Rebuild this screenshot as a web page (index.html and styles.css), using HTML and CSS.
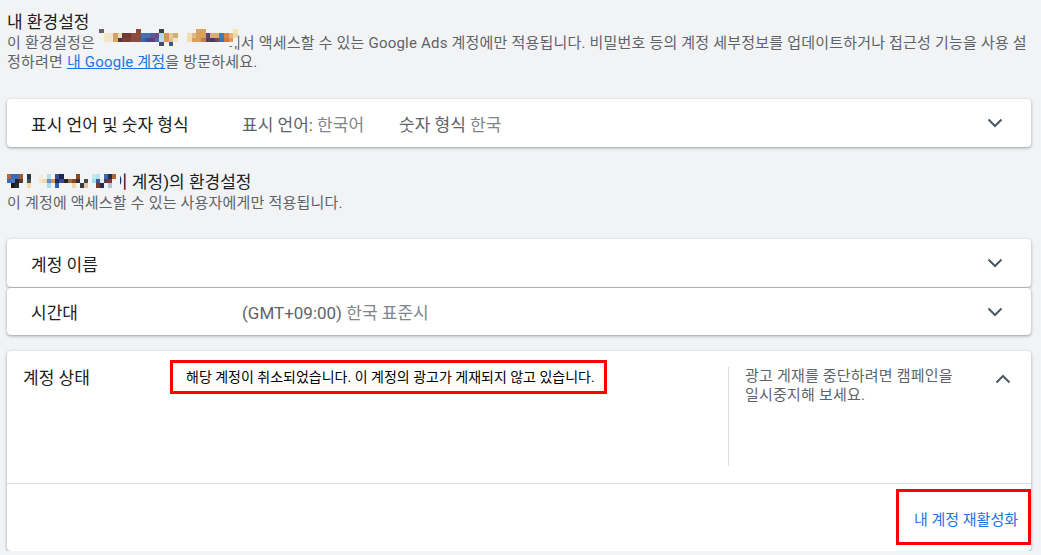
FILE: index.html
```html
<!DOCTYPE html>
<html lang="ko">
<head>
    <meta charset="UTF-8">
    <meta name="viewport" content="width=device-width, initial-scale=1.0">
    <title>환경설정 - Google Ads</title>
    <link rel="stylesheet" href="styles.css">
</head>
<body>
    <div class="page">
        <div class="section-head">
            <div class="section-title">내 환경설정</div>
            <div class="section-desc">이 환경설정은 <svg class="blur blur-email" viewBox="0 0 30 4" preserveAspectRatio="none" shape-rendering="crispEdges">
                    <rect x="27.5" y="0" width="2.5" height="4" fill="#f1f3f4"/>
                    <rect x="0" y="0" width="1" height="1" fill="#6b5b7b"/>
                    <rect x="8" y="0" width="1" height="1" fill="#8b4a3a"/>
                    <rect x="13" y="0" width="1" height="1" fill="#3c4048"/>
                    <rect x="21" y="0" width="2" height="1" fill="#d9a262"/>
                    <rect x="29" y="0" width="1" height="1" fill="#f0e6b0"/>
                    <rect x="1" y="1" width="1" height="1" fill="#f3e9bd"/>
                    <rect x="2" y="1" width="1" height="1" fill="#ece4d0"/>
                    <rect x="3" y="1" width="1" height="1" fill="#d5a064"/>
                    <rect x="4" y="1" width="1" height="1" fill="#e6dcc8"/>
                    <rect x="5" y="1" width="2" height="1" fill="#6e3a36"/>
                    <rect x="7" y="1" width="2" height="1" fill="#8d4b3d"/>
                    <rect x="9" y="1" width="2" height="1" fill="#4b6eae"/>
                    <rect x="11" y="1" width="1" height="1" fill="#5a5a9a"/>
                    <rect x="12" y="1" width="1" height="1" fill="#6d4a7e"/>
                    <rect x="13" y="1" width="1" height="1" fill="#b9d3ea"/>
                    <rect x="14" y="1" width="1" height="1" fill="#d9935a"/>
                    <rect x="15" y="1" width="1" height="1" fill="#e6c89e"/>
                    <rect x="16" y="1" width="1" height="1" fill="#cdb275"/>
                    <rect x="19" y="1" width="1" height="1" fill="#efdfb0"/>
                    <rect x="20" y="1" width="1" height="1" fill="#e2b985"/>
                    <rect x="21" y="1" width="2" height="1" fill="#d9a060"/>
                    <rect x="23" y="1" width="1" height="1" fill="#584a6f"/>
                    <rect x="24" y="1" width="2" height="1" fill="#dcaa72"/>
                    <rect x="26" y="1" width="1" height="1" fill="#4a78c2"/>
                    <rect x="27" y="1" width="1" height="1" fill="#d6874a"/>
                    <rect x="28" y="1" width="1" height="1" fill="#e6b17a"/>
                    <rect x="29" y="1" width="1" height="1" fill="#eed9a8"/>
                    <rect x="1" y="2" width="1" height="1" fill="#f0e8c0"/>
                    <rect x="2" y="2" width="1" height="1" fill="#efe6d2"/>
                    <rect x="3" y="2" width="1" height="1" fill="#d8a468"/>
                    <rect x="4" y="2" width="1" height="1" fill="#4a3a40"/>
                    <rect x="5" y="2" width="2" height="1" fill="#7a3e3a"/>
                    <rect x="7" y="2" width="2" height="1" fill="#8a4a3e"/>
                    <rect x="9" y="2" width="1" height="1" fill="#3a66b0"/>
                    <rect x="10" y="2" width="1" height="1" fill="#3a5090"/>
                    <rect x="11" y="2" width="1" height="1" fill="#6a3a70"/>
                    <rect x="12" y="2" width="1" height="1" fill="#4a6ab0"/>
                    <rect x="13" y="2" width="1" height="1" fill="#c0d8f0"/>
                    <rect x="14" y="2" width="1" height="1" fill="#e09850"/>
                    <rect x="15" y="2" width="1" height="1" fill="#e0c090"/>
                    <rect x="16" y="2" width="1" height="1" fill="#f2e6c4"/>
                    <rect x="19" y="2" width="1" height="1" fill="#f0dcb0"/>
                    <rect x="20" y="2" width="2" height="1" fill="#dc9e5c"/>
                    <rect x="22" y="2" width="1" height="1" fill="#b88060"/>
                    <rect x="23" y="2" width="1" height="1" fill="#5a4050"/>
                    <rect x="24" y="2" width="1" height="1" fill="#4a3a60"/>
                    <rect x="25" y="2" width="1" height="1" fill="#7a4a50"/>
                    <rect x="26" y="2" width="1" height="1" fill="#3a70c0"/>
                    <rect x="27" y="2" width="1" height="1" fill="#c87a4a"/>
                    <rect x="28" y="2" width="1" height="1" fill="#e09a5a"/>
                    <rect x="13" y="3" width="1" height="1" fill="#4a4e58"/>
                    <rect x="15" y="3" width="1" height="1" fill="#3a5a88"/>
                </svg>에서 액세스할 수 있는 Google Ads 계정에만 적용됩니다. 비밀번호 등의 계정 세부정보를 업데이트하거나 접근성 기능을 사용 설정하려면 <a href="#">내 Google 계정</a>을 방문하세요.</div>
        </div>

        <div class="panel panel-first">
            <div class="panel-row">
                <div class="panel-label">표시 언어 및 숫자 형식</div>
                <div class="panel-value"><span class="key">표시 언어:</span> 한국어<span class="key spaced">숫자 형식</span> 한국</div>
                <svg class="chevron" viewBox="0 0 16 10"><polyline points="1.5,1.5 8,8 14.5,1.5" /></svg>
            </div>
        </div>

        <div class="section-head section-account">
            <div class="section-title"><svg class="blur blur-account" viewBox="0 0 28 3" preserveAspectRatio="none" shape-rendering="crispEdges">
                    <rect x="26" y="0" width="2" height="3" fill="#f1f3f4"/>
                    <rect x="0" y="0" width="1" height="1" fill="#b06a3a"/>
                    <rect x="1" y="0" width="2" height="1" fill="#3a6ab8"/>
                    <rect x="3" y="0" width="1" height="1" fill="#a05a30"/>
                    <rect x="5" y="0" width="1" height="1" fill="#28363e"/>
                    <rect x="8" y="0" width="1" height="1" fill="#f3ecd8"/>
                    <rect x="10" y="0" width="1" height="1" fill="#b3e0ef"/>
                    <rect x="12" y="0" width="1" height="1" fill="#3050a0"/>
                    <rect x="13" y="0" width="1" height="1" fill="#1e2550"/>
                    <rect x="17" y="0" width="1" height="1" fill="#8a4a2a"/>
                    <rect x="21" y="0" width="1" height="1" fill="#c2e8f2"/>
                    <rect x="22" y="0" width="1" height="1" fill="#b5e2f0"/>
                    <rect x="24" y="0" width="1" height="1" fill="#3a6ab0"/>
                    <rect x="25" y="0" width="1" height="1" fill="#262a4e"/>
                    <rect x="26" y="0" width="1" height="1" fill="#b06a3a"/>
                    <rect x="0" y="1" width="1" height="1" fill="#3a6ab8"/>
                    <rect x="1" y="1" width="1" height="1" fill="#4a7ac0"/>
                    <rect x="2" y="1" width="1" height="1" fill="#23232e"/>
                    <rect x="3" y="1" width="1" height="1" fill="#5a3a2a"/>
                    <rect x="5" y="1" width="1" height="1" fill="#4a4a50"/>
                    <rect x="8" y="1" width="1" height="1" fill="#f0e6c8"/>
                    <rect x="9" y="1" width="1" height="1" fill="#f1d9a2"/>
                    <rect x="10" y="1" width="1" height="1" fill="#6a8ac0"/>
                    <rect x="11" y="1" width="1" height="1" fill="#d09a5a"/>
                    <rect x="12" y="1" width="1" height="1" fill="#1a2a6a"/>
                    <rect x="13" y="1" width="1" height="1" fill="#3a4a9a"/>
                    <rect x="14" y="1" width="1" height="1" fill="#262626"/>
                    <rect x="15" y="1" width="1" height="1" fill="#a06a3a"/>
                    <rect x="16" y="1" width="1" height="1" fill="#8a4a2a"/>
                    <rect x="17" y="1" width="1" height="1" fill="#3a2a2a"/>
                    <rect x="19" y="1" width="1" height="1" fill="#4a4a4a"/>
                    <rect x="21" y="1" width="1" height="1" fill="#a2e0f0"/>
                    <rect x="22" y="1" width="1" height="1" fill="#3a5a9a"/>
                    <rect x="23" y="1" width="1" height="1" fill="#dfeef5"/>
                    <rect x="24" y="1" width="1" height="1" fill="#5a3a50"/>
                    <rect x="25" y="1" width="1" height="1" fill="#7a3a3a"/>
                    <rect x="1" y="2" width="1" height="1" fill="#1a1a1a"/>
                    <rect x="2" y="2" width="1" height="1" fill="#2a2a2a"/>
                    <rect x="5" y="2" width="1" height="1" fill="#f3dba5"/>
                    <rect x="8" y="2" width="1" height="1" fill="#eef6f8"/>
                    <rect x="10" y="2" width="1" height="1" fill="#a8dcef"/>
                    <rect x="12" y="2" width="1" height="1" fill="#3060b0"/>
                    <rect x="16" y="2" width="1" height="1" fill="#f0d8a0"/>
                    <rect x="18" y="2" width="1" height="1" fill="#3a3a40"/>
                    <rect x="19" y="2" width="1" height="1" fill="#e0c8a0"/>
                    <rect x="22" y="2" width="1" height="1" fill="#7a3a2a"/>
                    <rect x="23" y="2" width="1" height="1" fill="#252a50"/>
                    <rect x="25" y="2" width="1" height="1" fill="#c0c0d0"/>
                </svg>이 계정)의 환경설정</div>
            <div class="section-desc">이 계정에 액세스할 수 있는 사용자에게만 적용됩니다.</div>
        </div>

        <div class="panel-group">
            <div class="panel">
                <div class="panel-row">
                    <div class="panel-label">계정 이름</div>
                    <div class="panel-value"></div>
                    <svg class="chevron" viewBox="0 0 16 10"><polyline points="1.5,1.5 8,8 14.5,1.5" /></svg>
                </div>
            </div>
            <div class="panel">
                <div class="panel-row panel-row-short">
                    <div class="panel-label">시간대</div>
                    <div class="panel-value"><span class="key">(GMT+09:00)</span> 한국 표준시</div>
                    <svg class="chevron" viewBox="0 0 16 10"><polyline points="1.5,1.5 8,8 14.5,1.5" /></svg>
                </div>
            </div>
        </div>

        <div class="panel panel-status">
            <div class="status-top">
                <div class="status-label">계정 상태</div>
                <div class="status-main">
                    <span class="status-message">해당 계정이 취소되었습니다. 이 계정의 광고가 게재되지 않고 있습니다.</span>
                </div>
                <div class="status-info">광고 게재를 중단하려면 캠페인을 일시중지해 보세요.</div>
                <svg class="chevron chevron-up" viewBox="0 0 16 10"><polyline points="1.5,8.5 8,2 14.5,8.5" /></svg>
            </div>
            <div class="status-actions">
                <a href="#" class="reactivate">내 계정 재활성화</a>
            </div>
        </div>
    </div>
</body>
</html>
```

FILE: styles.css
```css
body {
    margin: 0;
    background: #f1f3f4;
    font-family: Roboto, "Noto Sans CJK KR", sans-serif;
    color: #202124;
}
.page {
    padding: 10px 10px 0 7px;
}
.section-title {
    font-size: 17px;
    line-height: 24px;
    color: #202124;
}
.section-desc {
    font-size: 15px;
    line-height: 19px;
    letter-spacing: 0.2px;
    color: #5f6368;
}
.section-desc a {
    color: #1a73e8;
}
.blur {
    position: relative;
}
.blur-email {
    width: 139px;
    height: 17px;
    vertical-align: 2px;
    margin-top: -5px;
    margin-right: -11px;
}
.blur-account {
    width: 113px;
    height: 14px;
    vertical-align: 0;
    margin-right: -8px;
}
.panel {
    background: #fff;
    border-radius: 4px;
    box-shadow: 0 1px 2px rgba(60, 64, 67, 0.3), 0 1px 3px 1px rgba(60, 64, 67, 0.15);
}
.panel-first {
    margin-top: 27px;
}
.panel-row {
    display: flex;
    align-items: center;
    height: 48px;
    padding: 0 24px;
}
.panel-row-short {
    height: 47px;
}
.panel-label {
    width: 211px;
    font-size: 17px;
    color: #202124;
}
.panel-value {
    flex: 1;
    font-size: 17px;
    color: #80868b;
}
.panel-value .key {
    color: #5f6368;
}
.panel-value .spaced {
    margin-left: 35px;
}
.chevron {
    width: 16px;
    height: 10px;
    margin-right: 4px;
}
.chevron polyline {
    fill: none;
    stroke: #4d5866;
    stroke-width: 2;
}
.section-account {
    margin-top: 23px;
}
.panel-group {
    display: flex;
    flex-direction: column;
    gap: 1px;
    margin-top: 26px;
}
.panel-status {
    margin-top: 16px;
}
.status-top {
    display: flex;
    height: 132px;
    box-sizing: border-box;
    padding: 16px 0 17px 16px;
}
.status-label {
    width: 147px;
    font-size: 17px;
    line-height: 22px;
    color: #202124;
}
.status-main {
    flex: 1;
}
.status-message {
    display: inline-block;
    margin-top: -10px;
    border: 3px solid #f00;
    padding: 0 9px 0 13px;
    font-size: 14px;
    line-height: 28px;
    color: #000;
}
.status-info {
    width: 222px;
    border-left: 1px solid #dadce0;
    padding-left: 16px;
    font-size: 15px;
    line-height: 19px;
    letter-spacing: 0.2px;
    color: #5f6368;
}
.chevron-up {
    margin: 7px 20px 0 28px;
}
.status-actions {
    display: flex;
    justify-content: flex-end;
    border-top: 1px solid #dadce0;
    padding: 5px 0 6px;
}
.reactivate {
    border: 3px solid #f00;
    padding: 18px 10px 12px 15px;
    font-size: 15px;
    line-height: 20px;
    color: #1a73e8;
    text-decoration: none;
}
```
